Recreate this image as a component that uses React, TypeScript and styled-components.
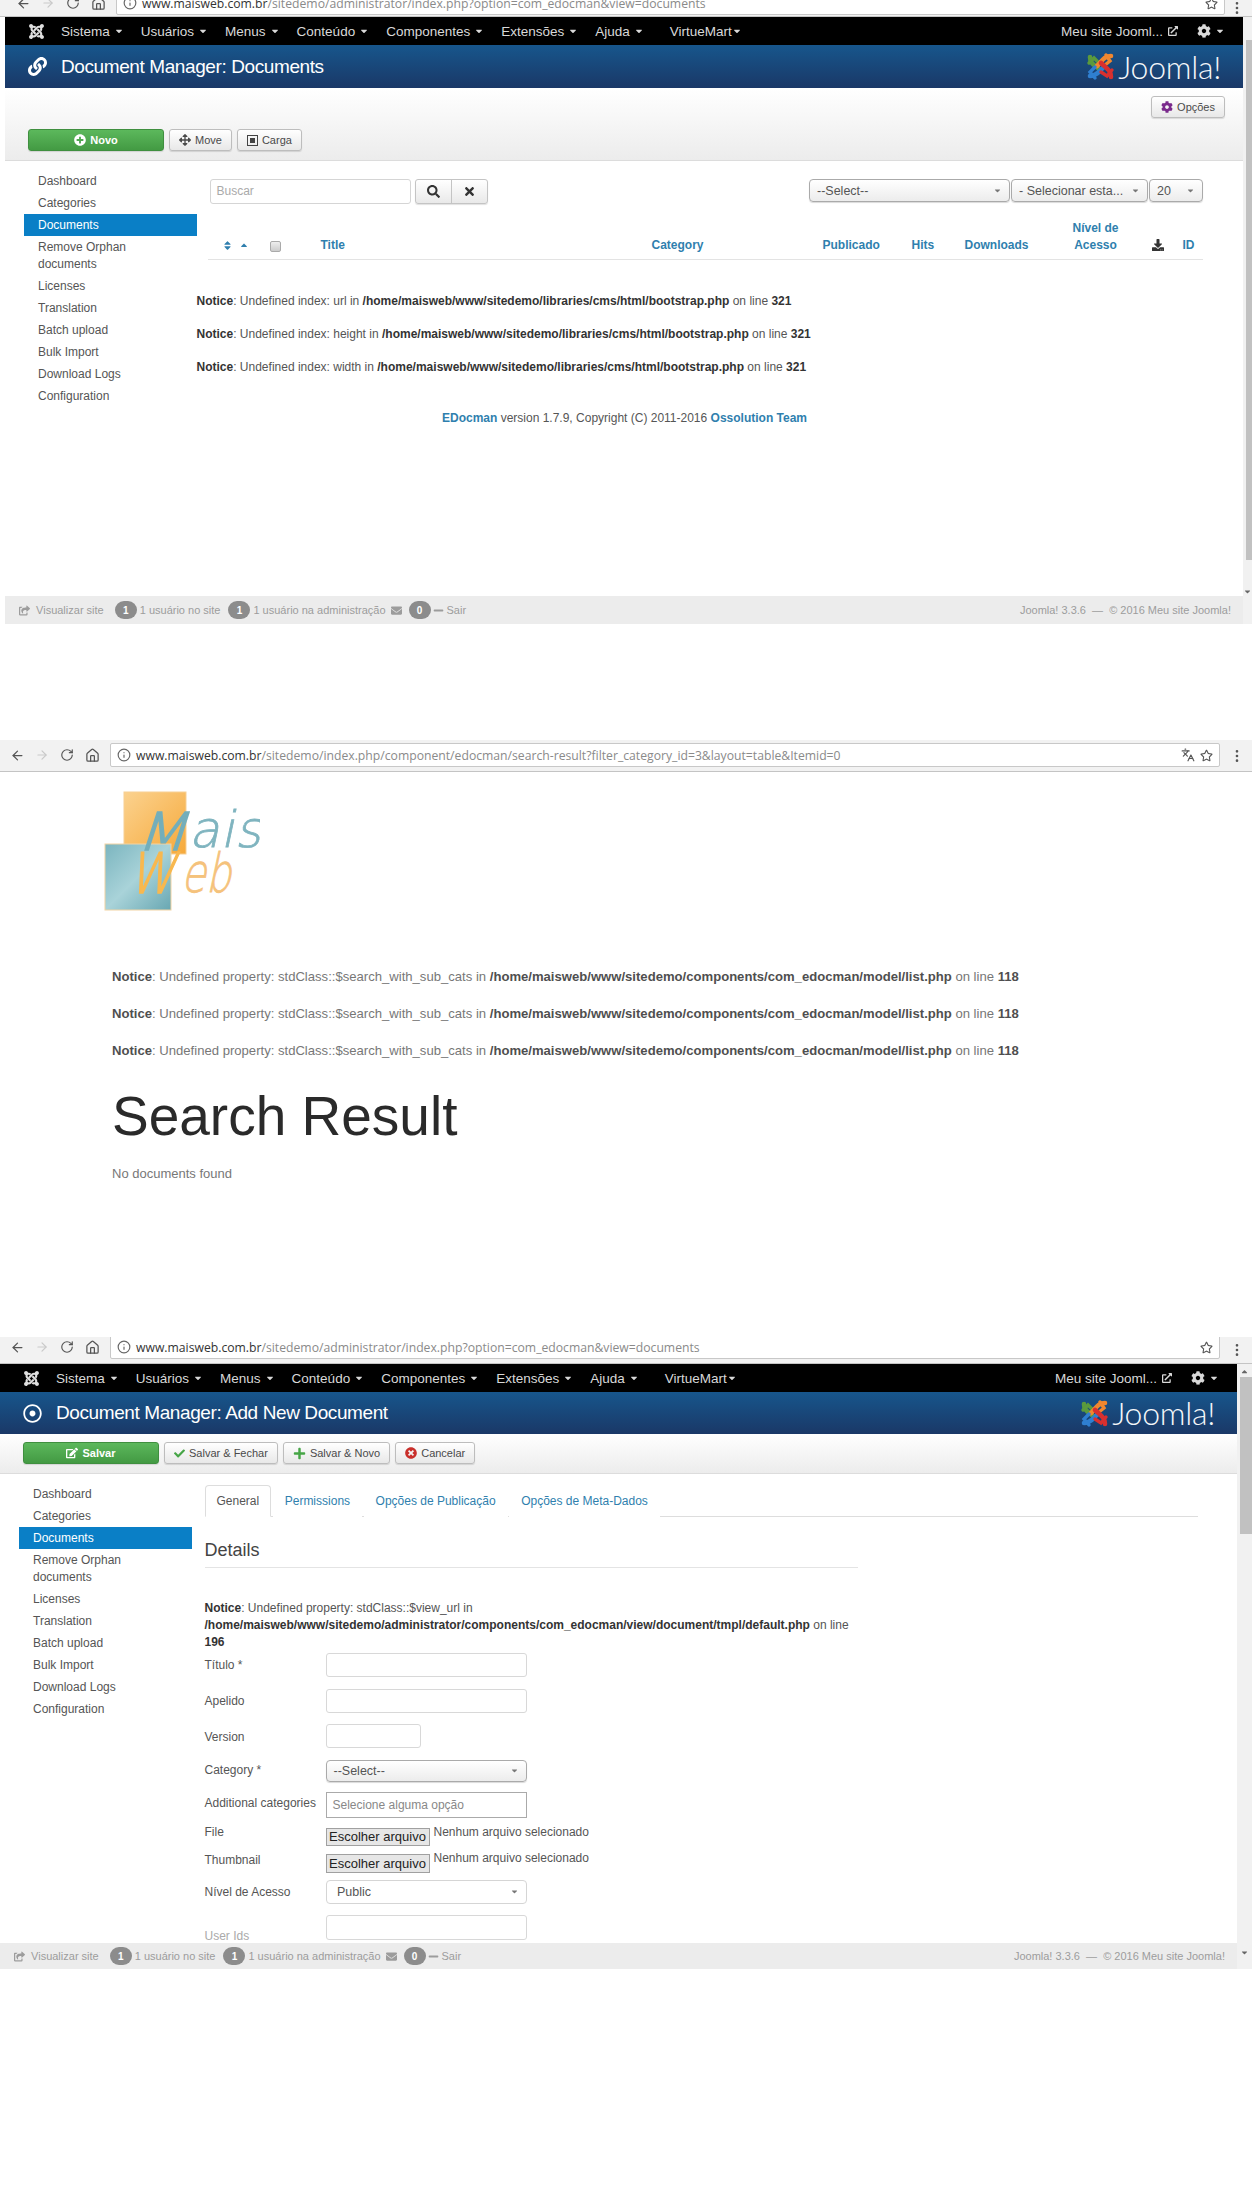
import styled, { createGlobalStyle } from 'styled-components';
import {
  FaArrowsAlt,
  FaCaretDown,
  FaCaretUp,
  FaCheck,
  FaCog,
  FaDownload,
  FaEdit,
  FaEnvelope,
  FaExternalLinkAlt,
  FaJoomla,
  FaLink,
  FaMinus,
  FaPlus,
  FaPlusCircle,
  FaRegDotCircle,
  FaRegStar,
  FaSearch,
  FaShareSquare,
  FaSort,
  FaTimes,
  FaTimesCircle,
} from 'react-icons/fa';
import { ArrowLeft, ArrowRight, Home, Info, Languages, MoreVertical, RotateCw } from 'lucide-react';

const GlobalStyle = createGlobalStyle`
  html, body { margin: 0; padding: 0; background: #fff; }
  body { font-family: "Liberation Sans", Arial, sans-serif; color: #333; }
`;

const Page = styled.div`
  width: 1252px;
  height: 2200px;
  overflow: hidden;
  background: #fff;
`;
const Spacer = styled.div`
  height: 116px;
`;

/* browser chrome */
const Chrome = styled.div<{ $height: number; $left: number; $right: number }>`
  height: ${(p) => p.$height}px;
  box-sizing: border-box;
  padding: 0 ${(p) => p.$right}px 0 ${(p) => p.$left}px;
  background: #f2f2f2;
  border-bottom: 1px solid #c4c4c4;
  overflow: hidden;
  position: relative;
`;
const ChromeRow = styled.div<{ $top: number }>`
  display: flex;
  align-items: center;
  height: 24px;
  margin-top: ${(p) => p.$top}px;
`;
const NavSlot = styled.span<{ $off?: boolean }>`
  width: 25px;
  flex: none;
  display: flex;
  color: ${(p) => (p.$off ? '#c9c9c9' : '#555')};
`;
const UrlBox = styled.div`
  flex: 1;
  height: 24px;
  box-sizing: border-box;
  display: flex;
  align-items: center;
  gap: 5px;
  padding: 0 6px 0 6px;
  background: #fff;
  border: 1px solid #c8c8c8;
  border-radius: 2px;
  color: #666;
`;
const UrlText = styled.div`
  flex: 1;
  font-family: "Open Sans", sans-serif;
  font-size: 12.2px;
  white-space: nowrap;
  color: #8a8a8a;
  b { font-weight: 400; color: #333; }
`;
const ChromeIcons = styled.span`
  display: flex;
  align-items: center;
  gap: 5px;
  color: #555;
`;
const Dots = styled.span`
  position: absolute;
  right: 7px;
  top: 50%;
  margin-top: -8px;
  display: flex;
  color: #555;
`;

/* admin layout */
const AdminFrame = styled.div<{ $left: number }>`
  display: flex;
  padding-left: ${(p) => p.$left}px;
`;
const AdminMain = styled.div`
  flex: 1;
  min-width: 0;
  display: flex;
  flex-direction: column;
`;
const ScrollTrack = styled.div<{ $width: number }>`
  width: ${(p) => p.$width}px;
  flex: none;
  background: #f1f1f1;
  display: flex;
  flex-direction: column;
  align-items: flex-end;
  color: #555;
  font-size: 9px;
`;
const ScrollThumb = styled.div<{ $top: number; $height: number; $width: number }>`
  width: ${(p) => p.$width}px;
  height: ${(p) => p.$height}px;
  margin-top: ${(p) => p.$top}px;
  background: #c1c1c1;
`;
const ScrollArrow = styled.div<{ $top: number }>`
  width: 100%;
  display: flex;
  justify-content: center;
  margin-top: ${(p) => p.$top}px;
  color: #666;
`;

const Navbar = styled.div`
  height: 28px;
  flex: none;
  display: flex;
  align-items: center;
  background: #000;
  color: #d9d9d9;
  font-size: 13.5px;
  padding: 0 0 0 23px;
`;
const NavLogo = styled.span`
  display: flex;
  width: 33px;
  flex: none;
  color: #e0e0e0;
`;
const NavItem = styled.span<{ $tight?: boolean; $extra?: number }>`
  display: flex;
  align-items: center;
  gap: ${(p) => (p.$tight ? 0 : 4)}px;
  margin-right: ${(p) => p.$extra ?? 17}px;
  white-space: nowrap;
  svg { font-size: 10px; }
`;
const NavRight = styled.div`
  margin-left: auto;
  display: flex;
  align-items: center;
  padding-right: 18px;
`;
const SiteLink = styled.span`
  display: flex;
  align-items: center;
  gap: 5px;
  margin-right: 19px;
  svg { font-size: 10px; }
`;
const CogMenu = styled.span`
  display: flex;
  align-items: center;
  gap: 4px;
  svg:first-child { font-size: 14px; }
  svg:last-child { font-size: 10px; }
`;

const TitleBar = styled.div<{ $height: number }>`
  height: ${(p) => p.$height}px;
  flex: none;
  display: flex;
  align-items: center;
  background: linear-gradient(#17568c, #1a3867);
  color: #fff;
  padding-left: 23px;
`;
const TitleIcon = styled.span`
  width: 33px;
  flex: none;
  display: flex;
  font-size: 19px;
`;
const PageTitle = styled.h1`
  margin: 0;
  font-size: 19px;
  letter-spacing: -0.4px;
  font-weight: 400;
  white-space: nowrap;
`;
const Brand = styled.div`
  margin-left: auto;
  margin-right: 22px;
  display: flex;
  align-items: center;
  gap: 3px;
`;
const BrandName = styled.span`
  font-family: Lato, sans-serif;
  font-weight: 300;
  font-size: 32px;
  letter-spacing: -0.3px;
  line-height: 36px;
  color: #f4f7fa;
`;

const Toolbar = styled.div<{ $height: number }>`
  height: ${(p) => p.$height}px;
  flex: none;
  box-sizing: border-box;
  padding: 0 21px 9px 23px;
  display: flex;
  align-items: flex-end;
  gap: 5px;
  position: relative;
  background: linear-gradient(#fff, #ececec);
  border-bottom: 1px solid #dcdcdc;
`;
const ToolButton = styled.span<{ $primary?: boolean }>`
  height: 22px;
  box-sizing: border-box;
  display: inline-flex;
  align-items: center;
  justify-content: center;
  gap: 4px;
  padding: 0 9px;
  border-radius: 3px;
  font-size: 11px;
  white-space: nowrap;
  color: ${(p) => (p.$primary ? '#fff' : '#4a4a4a')};
  font-weight: ${(p) => (p.$primary ? 700 : 400)};
  width: ${(p) => (p.$primary ? '136px' : 'auto')};
  background: ${(p) => (p.$primary ? 'linear-gradient(#5cb85c, #439a43)' : 'linear-gradient(#fff, #e8e8e8)')};
  border: 1px solid ${(p) => (p.$primary ? '#3f8f3f' : '#bdbdbd')};
  box-shadow: 0 1px 1px rgba(0, 0, 0, 0.12);
`;
const ToolGlyph = styled.span<{ $color?: string; $size?: number }>`
  display: inline-flex;
  color: ${(p) => p.$color ?? 'inherit'};
  font-size: ${(p) => p.$size ?? 11}px;
`;
const OptionsSlot = styled.div`
  position: absolute;
  right: 18px;
  top: 8px;
`;
const BoxGlyph = styled.span`
  width: 9px;
  height: 9px;
  border: 1px solid #444;
  display: inline-flex;
  align-items: center;
  justify-content: center;
  &::after {
    content: '';
    width: 5px;
    height: 5px;
    background: #444;
  }
`;

const Content = styled.div<{ $height: number }>`
  height: ${(p) => p.$height}px;
  flex: none;
  display: flex;
  overflow: hidden;
  background: #fff;
`;
const SideMenu = styled.ul`
  list-style: none;
  margin: 9px 0 0 19px;
  padding: 0;
  width: 172.5px;
  flex: none;
`;
const SideItem = styled.li<{ $active?: boolean }>`
  padding: 2.5px 14px;
  line-height: 17px;
  font-size: 12px;
  color: ${(p) => (p.$active ? '#fff' : '#555')};
  background: ${(p) => (p.$active ? '#0a7fc6' : 'transparent')};
`;
const Panel = styled.div`
  flex: 1;
  min-width: 0;
`;

const FilterBar = styled.div`
  display: flex;
  margin: 18px 40px 0 13px;
`;
const SearchInput = styled.div`
  width: 201px;
  height: 25px;
  box-sizing: border-box;
  padding: 0 6px;
  line-height: 23px;
  font-size: 12px;
  color: #aaa;
  border: 1px solid #d5d5d5;
  border-radius: 3px;
`;
const SearchGroup = styled.div`
  display: flex;
  margin-left: 4px;
  height: 25px;
  box-sizing: border-box;
  border: 1px solid #c4c4c4;
  border-radius: 3px;
  background: linear-gradient(#fff, #e9e9e9);
  box-shadow: 0 1px 1px rgba(0, 0, 0, 0.12);
`;
const SearchButton = styled.span<{ $divide?: boolean }>`
  width: 35px;
  display: flex;
  align-items: center;
  justify-content: center;
  font-size: 13px;
  color: #333;
  border-right: ${(p) => (p.$divide ? '1px solid #c4c4c4' : 'none')};
`;
const Selects = styled.div`
  margin-left: auto;
  display: flex;
  gap: 1px;
`;
const Select = styled.div<{ $width: number; $height?: number; $plain?: boolean }>`
  width: ${(p) => p.$width}px;
  height: ${(p) => p.$height ?? 23}px;
  box-sizing: border-box;
  display: flex;
  align-items: center;
  justify-content: space-between;
  padding: 0 7px;
  font-size: 12.5px;
  white-space: nowrap;
  color: #555;
  border: 1px solid ${(p) => (p.$plain ? '#d5d5d5' : '#aaa')};
  border-radius: 4px;
  background: ${(p) => (p.$plain ? '#fff' : 'linear-gradient(#fff, #ececec)')};
  box-shadow: ${(p) => (p.$plain ? 'none' : '0 1px 1px rgba(0, 0, 0, 0.15)')};
  svg { font-size: 9px; color: #777; flex: none; }
`;

const DocHead = styled.div`
  margin: 16px 40px 0 11px;
  height: 40px;
  box-sizing: border-box;
  display: grid;
  grid-template-columns: 62px 51px 331px 171px 89px 53px 104px 54px 60px 21px;
  align-items: end;
  padding-bottom: 7px;
  border-bottom: 1px solid #e3e3e3;
  font-size: 12px;
  line-height: 17px;
  font-weight: 700;
  color: #2f7fae;
`;
const HeadCell = styled.span<{ $center?: boolean; $inset?: number }>`
  text-align: ${(p) => (p.$center ? 'center' : 'left')};
  padding-left: ${(p) => p.$inset ?? 0}px;
  display: ${(p) => (p.$inset ? 'flex' : 'block')};
  gap: 6px;
  svg { display: block; margin-top: 2px; margin-bottom: 3px; }
`;
const CheckBox = styled.span`
  display: block;
  width: 11px;
  height: 11px;
  box-sizing: border-box;
  margin-bottom: 2px;
  border: 1px solid #aaa;
  border-radius: 2px;
  background: linear-gradient(#eee, #ccc);
`;

const NoticeLine = styled.p<{ $top: number; $size?: number; $soft?: boolean }>`
  margin: ${(p) => p.$top}px 0 0;
  font-size: ${(p) => p.$size ?? 12}px;
  line-height: 17px;
  color: ${(p) => (p.$soft ? '#777' : '#555')};
  b { color: ${(p) => (p.$soft ? '#4f4f4f' : '#333')}; }
`;
const Credit = styled.div`
  width: 856px;
  margin-top: 34px;
  text-align: center;
  font-size: 12px;
  line-height: 17px;
  color: #555;
  b { color: #2f7fae; }
`;

const StatusBar = styled.div<{ $height: number }>`
  height: ${(p) => p.$height}px;
  flex: none;
  display: flex;
  align-items: center;
  padding: 0 12px 0 14px;
  background: #ececec;
  color: #9c9c9c;
  font-size: 11px;
  white-space: nowrap;
`;
const StatusGroup = styled.span<{ $gap: number }>`
  display: flex;
  align-items: center;
  gap: 3px;
  margin-right: ${(p) => p.$gap}px;
`;
const Badge = styled.span`
  width: 22px;
  height: 18px;
  border-radius: 9px;
  display: inline-flex;
  align-items: center;
  justify-content: center;
  background: #8c8c8c;
  color: #fff;
  font-weight: 700;
  font-size: 10px;
`;
const StatusRight = styled.span`
  margin-left: auto;
`;

/* second shot, the front-end page */
const SiteBody = styled.div`
  height: 565px;
  padding-left: 112px;
  overflow: hidden;
`;
const LogoBox = styled.div`
  margin: 19px 0 0 -8px;
  height: 120px;
`;
const ResultTitle = styled.h1`
  margin: 25px 0 0;
  font-size: 55px;
  line-height: 64px;
  font-weight: 400;
  color: #2a2a2a;
`;
const EmptyNote = styled.p`
  margin: 17px 0 0;
  font-size: 13px;
  line-height: 17px;
  color: #777;
`;

/* edit form */
const Tabs = styled.div`
  display: flex;
  align-items: flex-end;
  margin: 10px 39px 0 13px;
  height: 33px;
  box-sizing: border-box;
  border-bottom: 1px solid #ddd;
`;
const Tab = styled.span<{ $active?: boolean }>`
  height: 32px;
  box-sizing: border-box;
  padding: 0 ${(p) => (p.$active ? 11 : 12)}px;
  margin-right: 1.5px;
  display: flex;
  align-items: center;
  font-size: 12px;
  color: ${(p) => (p.$active ? '#555' : '#2f7fae')};
  background: #fff;
  border: ${(p) => (p.$active ? '1px solid #ddd' : 'none')};
  border-bottom: ${(p) => (p.$active ? '1px solid #fff' : 'none')};
  border-radius: 4px 4px 0 0;
  margin-bottom: -1px;
`;
const FormColumn = styled.div`
  width: 653px;
  margin-left: 13px;
`;
const SectionTitle = styled.h2`
  margin: 22px 0 0;
  padding-bottom: 6px;
  font-size: 18px;
  line-height: 22px;
  font-weight: 400;
  color: #444;
  border-bottom: 1px solid #e4e4e4;
`;
const FieldRow = styled.div<{ $gap: number }>`
  display: flex;
  align-items: flex-start;
  margin-top: ${(p) => p.$gap}px;
`;
const FieldLabel = styled.div<{ $dy: number; $muted?: boolean }>`
  width: 121px;
  flex: none;
  margin-top: ${(p) => p.$dy}px;
  font-size: 12px;
  line-height: 17px;
  white-space: nowrap;
  color: ${(p) => (p.$muted ? '#aaa' : '#555')};
`;
const TextBox = styled.div<{ $width: number; $height?: number; $dark?: boolean }>`
  width: ${(p) => p.$width}px;
  height: ${(p) => p.$height ?? 24}px;
  box-sizing: border-box;
  padding: 0 6px;
  font-size: 12px;
  line-height: ${(p) => (p.$height ?? 24) - 2}px;
  color: #888;
  border: 1px solid ${(p) => (p.$dark ? '#aaa' : '#d8d8d8')};
  border-radius: ${(p) => (p.$dark ? 0 : 3)}px;
`;
const FileButton = styled.span<{ $height: number }>`
  width: 104px;
  height: ${(p) => p.$height}px;
  box-sizing: border-box;
  display: flex;
  align-items: center;
  justify-content: center;
  font-size: 13px;
  color: #222;
  background: #e6e6e6;
  border: 1px solid #a0a0a0;
  white-space: nowrap;
`;
const FileHint = styled.span`
  margin: -3.5px 0 0 4px;
  font-size: 12px;
  line-height: 17px;
  color: #555;
  white-space: nowrap;
`;

function JoomlaMark() {
  return (
    <svg width="29" height="29" viewBox="0 0 29 29" fill="none" strokeWidth="4.6" strokeLinecap="round">
      <path d="M4 5 C4 12 9 13 14 18" stroke="#5b9a3c" />
      <path d="M3 11 L8 6 L13 11" stroke="#5b9a3c" strokeWidth="3.4" />
      <path d="M25 4 C18 4 16 9 11 14" stroke="#f0872f" />
      <path d="M20 3 L24 9 L19 13" stroke="#f0872f" strokeWidth="3.4" />
      <path d="M4 24 C11 24 13 19 18 15" stroke="#2f7fd0" />
      <path d="M9 26 L4 20 L9 15" stroke="#2f7fd0" strokeWidth="3.4" />
      <path d="M25 25 C25 18 20 16 15 11" stroke="#d8302f" />
      <path d="M26 18 L21 24 L15 20" stroke="#d8302f" strokeWidth="3.4" />
    </svg>
  );
}

function MaisWebLogo() {
  return (
    <svg width="156" height="120" viewBox="0 0 156 120">
      <defs>
        <linearGradient id="orangeFill" x1="0" y1="0" x2="1" y2="1">
          <stop offset="0" stopColor="#fbd28f" />
          <stop offset="1" stopColor="#f6a93a" />
        </linearGradient>
        <linearGradient id="tealFill" x1="0" y1="0" x2="1" y2="1">
          <stop offset="0" stopColor="#7bb5bf" />
          <stop offset="0.5" stopColor="#a9d3d9" />
          <stop offset="1" stopColor="#68a7b2" />
        </linearGradient>
      </defs>
      <rect x="20" y="1" width="62" height="62" fill="url(#orangeFill)" stroke="#f7cf94" />
      <rect x="1" y="53" width="66" height="66" fill="url(#tealFill)" stroke="#f2d4a4" />
      <g fontFamily="'DejaVu Sans', sans-serif" fontWeight="200">
        <text x="0" y="0" fontSize="52" fill="#74aeba" stroke="#74aeba" strokeWidth="1.6" textLength="50" lengthAdjust="spacingAndGlyphs" transform="translate(32 59) skewX(-18)">M</text>
        <text x="0" y="0" fontSize="50" fill="#7fb4bf" stroke="#7fb4bf" strokeWidth="0.8" textLength="72" lengthAdjust="spacing" transform="translate(85 56) skewX(-12)">ais</text>
        <text x="0" y="0" fontSize="56" fill="#f8b84f" stroke="#f8b84f" strokeWidth="1.6" textLength="46" lengthAdjust="spacingAndGlyphs" transform="translate(24 102) skewX(-14)">W</text>
        <text x="0" y="0" fontSize="54" fill="#f5c27b" stroke="#f5c27b" strokeWidth="0.8" textLength="50" lengthAdjust="spacingAndGlyphs" transform="translate(77 101) skewX(-12)">eb</text>
      </g>
    </svg>
  );
}

function BrowserBar(props: { height: number; left: number; right: number; top: number; url: [string, string]; translate?: boolean }) {
  return (
    <Chrome $height={props.height} $left={props.left} $right={props.right}>
      <ChromeRow $top={props.top}>
        <NavSlot><ArrowLeft size={15} /></NavSlot>
        <NavSlot $off><ArrowRight size={14} /></NavSlot>
        <NavSlot><RotateCw size={14} /></NavSlot>
        <NavSlot><Home size={15} /></NavSlot>
        <UrlBox>
          <Info size={14} />
          <UrlText><b>{props.url[0]}</b>{props.url[1]}</UrlText>
          <ChromeIcons>
            {props.translate && <Languages size={14} />}
            <FaRegStar size={13} />
          </ChromeIcons>
        </UrlBox>
      </ChromeRow>
      <Dots><MoreVertical size={16} /></Dots>
    </Chrome>
  );
}

const menuItems = ['Sistema', 'Usuários', 'Menus', 'Conteúdo', 'Componentes', 'Extensões', 'Ajuda'];

function AdminNav() {
  return (
    <Navbar>
      <NavLogo><FaJoomla size={17} /></NavLogo>
      {menuItems.map((label, i) => (
        <NavItem key={label} $extra={i === menuItems.length - 1 ? 26 : 17}>
          {label} <FaCaretDown />
        </NavItem>
      ))}
      <NavItem $tight>VirtueMart<FaCaretDown /></NavItem>
      <NavRight>
        <SiteLink>Meu site Jooml... <FaExternalLinkAlt /></SiteLink>
        <CogMenu><FaCog /><FaCaretDown /></CogMenu>
      </NavRight>
    </Navbar>
  );
}

const sideItems = ['Dashboard', 'Categories', 'Documents', 'Remove Orphan documents', 'Licenses', 'Translation', 'Batch upload', 'Bulk Import', 'Download Logs', 'Configuration'];

function AdminSide() {
  return (
    <SideMenu>
      {sideItems.map((label) => (
        <SideItem key={label} $active={label === 'Documents'}>
          {label === 'Remove Orphan documents' ? <>Remove Orphan<br />documents</> : label}
        </SideItem>
      ))}
    </SideMenu>
  );
}

function AdminStatus({ height }: { height: number }) {
  return (
    <StatusBar $height={height}>
      <StatusGroup $gap={11}>
        <ToolGlyph><FaShareSquare /></ToolGlyph>
        <span>&nbsp;Visualizar site</span>
      </StatusGroup>
      <StatusGroup $gap={8}>
        <Badge>1</Badge> 1 usuário no site
      </StatusGroup>
      <StatusGroup $gap={5}>
        <Badge>1</Badge> 1 usuário na administração
      </StatusGroup>
      <StatusGroup $gap={7}>
        <ToolGlyph><FaEnvelope /></ToolGlyph>
      </StatusGroup>
      <StatusGroup $gap={2}>
        <Badge>0</Badge>
      </StatusGroup>
      <StatusGroup $gap={0}>
        <ToolGlyph><FaMinus /></ToolGlyph>Sair
      </StatusGroup>
      <StatusRight>Joomla! 3.3.6 &nbsp;—&nbsp; © 2016 Meu site Joomla!</StatusRight>
    </StatusBar>
  );
}

function BrandLogo() {
  return (
    <Brand>
      <JoomlaMark />
      <BrandName>Joomla!</BrandName>
    </Brand>
  );
}

function DocumentsScreen() {
  return (
    <>
      <BrowserBar height={17} left={16} right={27} top={-9} url={['www.maisweb.com.br', '/sitedemo/administrator/index.php?option=com_edocman&view=documents']} />
      <AdminFrame $left={5}>
        <AdminMain>
          <AdminNav />
          <TitleBar $height={43}>
            <TitleIcon><FaLink /></TitleIcon>
            <PageTitle>Document Manager: Documents</PageTitle>
            <BrandLogo />
          </TitleBar>
          <Toolbar $height={73}>
            <ToolButton $primary><ToolGlyph $size={12}><FaPlusCircle /></ToolGlyph> Novo</ToolButton>
            <ToolButton><ToolGlyph $size={12}><FaArrowsAlt /></ToolGlyph> Move</ToolButton>
            <ToolButton><BoxGlyph /> Carga</ToolButton>
            <OptionsSlot>
              <ToolButton><ToolGlyph $color="#7a2a8c" $size={12}><FaCog /></ToolGlyph> Opções</ToolButton>
            </OptionsSlot>
          </Toolbar>
          <Content $height={435}>
            <AdminSide />
            <Panel>
              <FilterBar>
                <SearchInput>Buscar</SearchInput>
                <SearchGroup>
                  <SearchButton $divide><FaSearch /></SearchButton>
                  <SearchButton><FaTimes /></SearchButton>
                </SearchGroup>
                <Selects>
                  <Select $width={201}>--Select--<FaCaretDown /></Select>
                  <Select $width={137}>- Selecionar esta...<FaCaretDown /></Select>
                  <Select $width={54}>20<FaCaretDown /></Select>
                </Selects>
              </FilterBar>
              <DocHead>
                <HeadCell $inset={14}><FaSort size={11} /><FaCaretUp size={10} /></HeadCell>
                <HeadCell><CheckBox /></HeadCell>
                <HeadCell>Title</HeadCell>
                <HeadCell>Category</HeadCell>
                <HeadCell>Publicado</HeadCell>
                <HeadCell>Hits</HeadCell>
                <HeadCell>Downloads</HeadCell>
                <HeadCell $center>Nível de<br />Acesso</HeadCell>
                <HeadCell $inset={29}><FaDownload color="#333" size={12} /></HeadCell>
                <HeadCell>ID</HeadCell>
              </DocHead>
              <NoticeLine $top={33}><b>Notice</b>: Undefined index: url in <b>/home/maisweb/www/sitedemo/libraries/cms/html/bootstrap.php</b> on line <b>321</b></NoticeLine>
              <NoticeLine $top={16}><b>Notice</b>: Undefined index: height in <b>/home/maisweb/www/sitedemo/libraries/cms/html/bootstrap.php</b> on line <b>321</b></NoticeLine>
              <NoticeLine $top={16}><b>Notice</b>: Undefined index: width in <b>/home/maisweb/www/sitedemo/libraries/cms/html/bootstrap.php</b> on line <b>321</b></NoticeLine>
              <Credit><b>EDocman</b> version 1.7.9, Copyright (C) 2011-2016 <b>Ossolution Team</b></Credit>
            </Panel>
          </Content>
          <AdminStatus height={28} />
        </AdminMain>
        <ScrollTrack $width={9}>
          <ScrollThumb $width={6} $top={23} $height={520} />
          <ScrollArrow $top={27}><FaCaretDown /></ScrollArrow>
        </ScrollTrack>
      </AdminFrame>
    </>
  );
}

function SearchScreen() {
  const notice = (
    <>
      <b>Notice</b>: Undefined property: stdClass::$search_with_sub_cats in <b>/home/maisweb/www/sitedemo/components/com_edocman/model/list.php</b> on line <b>118</b>
    </>
  );
  return (
    <>
      <BrowserBar height={32} left={10} right={32} top={3} translate url={['www.maisweb.com.br', '/sitedemo/index.php/component/edocman/search-result?filter_category_id=3&layout=table&Itemid=0']} />
      <SiteBody>
        <LogoBox><MaisWebLogo /></LogoBox>
        <NoticeLine $top={57} $size={13.1} $soft>{notice}</NoticeLine>
        <NoticeLine $top={20} $size={13.1} $soft>{notice}</NoticeLine>
        <NoticeLine $top={20} $size={13.1} $soft>{notice}</NoticeLine>
        <ResultTitle>Search Result</ResultTitle>
        <EmptyNote>No documents found</EmptyNote>
      </SiteBody>
    </>
  );
}

const fields = [
  { label: 'Título *', dy: 4.5, gap: 1.5, width: 201 },
  { label: 'Apelido', dy: 4.5, gap: 12, width: 201 },
  { label: 'Version', dy: 5.5, gap: 11, width: 95 },
];

function EditScreen() {
  return (
    <>
      <BrowserBar height={27} left={10} right={32} top={-2} url={['www.maisweb.com.br', '/sitedemo/administrator/index.php?option=com_edocman&view=documents']} />
      <AdminFrame $left={0}>
        <AdminMain>
          <AdminNav />
          <TitleBar $height={42}>
            <TitleIcon><FaRegDotCircle /></TitleIcon>
            <PageTitle>Document Manager: Add New Document</PageTitle>
            <BrandLogo />
          </TitleBar>
          <Toolbar $height={40}>
            <ToolButton $primary><ToolGlyph $size={12}><FaEdit /></ToolGlyph> Salvar</ToolButton>
            <ToolButton><ToolGlyph $color="#46a546" $size={11}><FaCheck /></ToolGlyph> Salvar &amp; Fechar</ToolButton>
            <ToolButton><ToolGlyph $color="#46a546" $size={13}><FaPlus /></ToolGlyph> Salvar &amp; Novo</ToolButton>
            <ToolButton><ToolGlyph $color="#c9302c" $size={12}><FaTimesCircle /></ToolGlyph> Cancelar</ToolButton>
          </Toolbar>
          <Content $height={469}>
            <AdminSide />
            <Panel>
              <Tabs>
                <Tab $active>General</Tab>
                <Tab>Permissions</Tab>
                <Tab>Opções de Publicação</Tab>
                <Tab>Opções de Meta-Dados</Tab>
              </Tabs>
              <FormColumn>
                <SectionTitle>Details</SectionTitle>
                <NoticeLine $top={32}>
                  <b>Notice</b>: Undefined property: stdClass::$view_url in<br />
                  <b>/home/maisweb/www/sitedemo/administrator/components/com_edocman/view/document/tmpl/default.php</b> on line<br />
                  <b>196</b>
                </NoticeLine>
                {fields.map((f) => (
                  <FieldRow key={f.label} $gap={f.gap}>
                    <FieldLabel $dy={f.dy}>{f.label}</FieldLabel>
                    <TextBox $width={f.width} />
                  </FieldRow>
                ))}
                <FieldRow $gap={12}>
                  <FieldLabel $dy={2.5}>Category *</FieldLabel>
                  <Select $width={201} $height={22}>--Select--<FaCaretDown /></Select>
                </FieldRow>
                <FieldRow $gap={10}>
                  <FieldLabel $dy={3.5}>Additional categories</FieldLabel>
                  <TextBox $width={201} $height={26} $dark>Selecione alguma opção</TextBox>
                </FieldRow>
                <FieldRow $gap={10}>
                  <FieldLabel $dy={-3.5}>File</FieldLabel>
                  <FileButton $height={18}>Escolher arquivo</FileButton>
                  <FileHint>Nenhum arquivo selecionado</FileHint>
                </FieldRow>
                <FieldRow $gap={8}>
                  <FieldLabel $dy={-1.5}>Thumbnail</FieldLabel>
                  <FileButton $height={19}>Escolher arquivo</FileButton>
                  <FileHint>Nenhum arquivo selecionado</FileHint>
                </FieldRow>
                <FieldRow $gap={7}>
                  <FieldLabel $dy={4.5}>Nível de Acesso</FieldLabel>
                  <Select $width={201} $height={24} $plain>&nbsp;Public<FaCaretDown /></Select>
                </FieldRow>
                <FieldRow $gap={11}>
                  <FieldLabel $dy={13.5} $muted>User Ids</FieldLabel>
                  <TextBox $width={201} $height={25} />
                </FieldRow>
              </FormColumn>
            </Panel>
          </Content>
          <AdminStatus height={26} />
        </AdminMain>
        <ScrollTrack $width={15}>
          <ScrollArrow $top={3}><FaCaretUp /></ScrollArrow>
          <ScrollThumb $width={12} $top={1} $height={157} />
          <ScrollArrow $top={414}><FaCaretDown /></ScrollArrow>
        </ScrollTrack>
      </AdminFrame>
    </>
  );
}

export default function App() {
  return (
    <Page>
      <GlobalStyle />
      <DocumentsScreen />
      <Spacer />
      <SearchScreen />
      <EditScreen />
    </Page>
  );
}
